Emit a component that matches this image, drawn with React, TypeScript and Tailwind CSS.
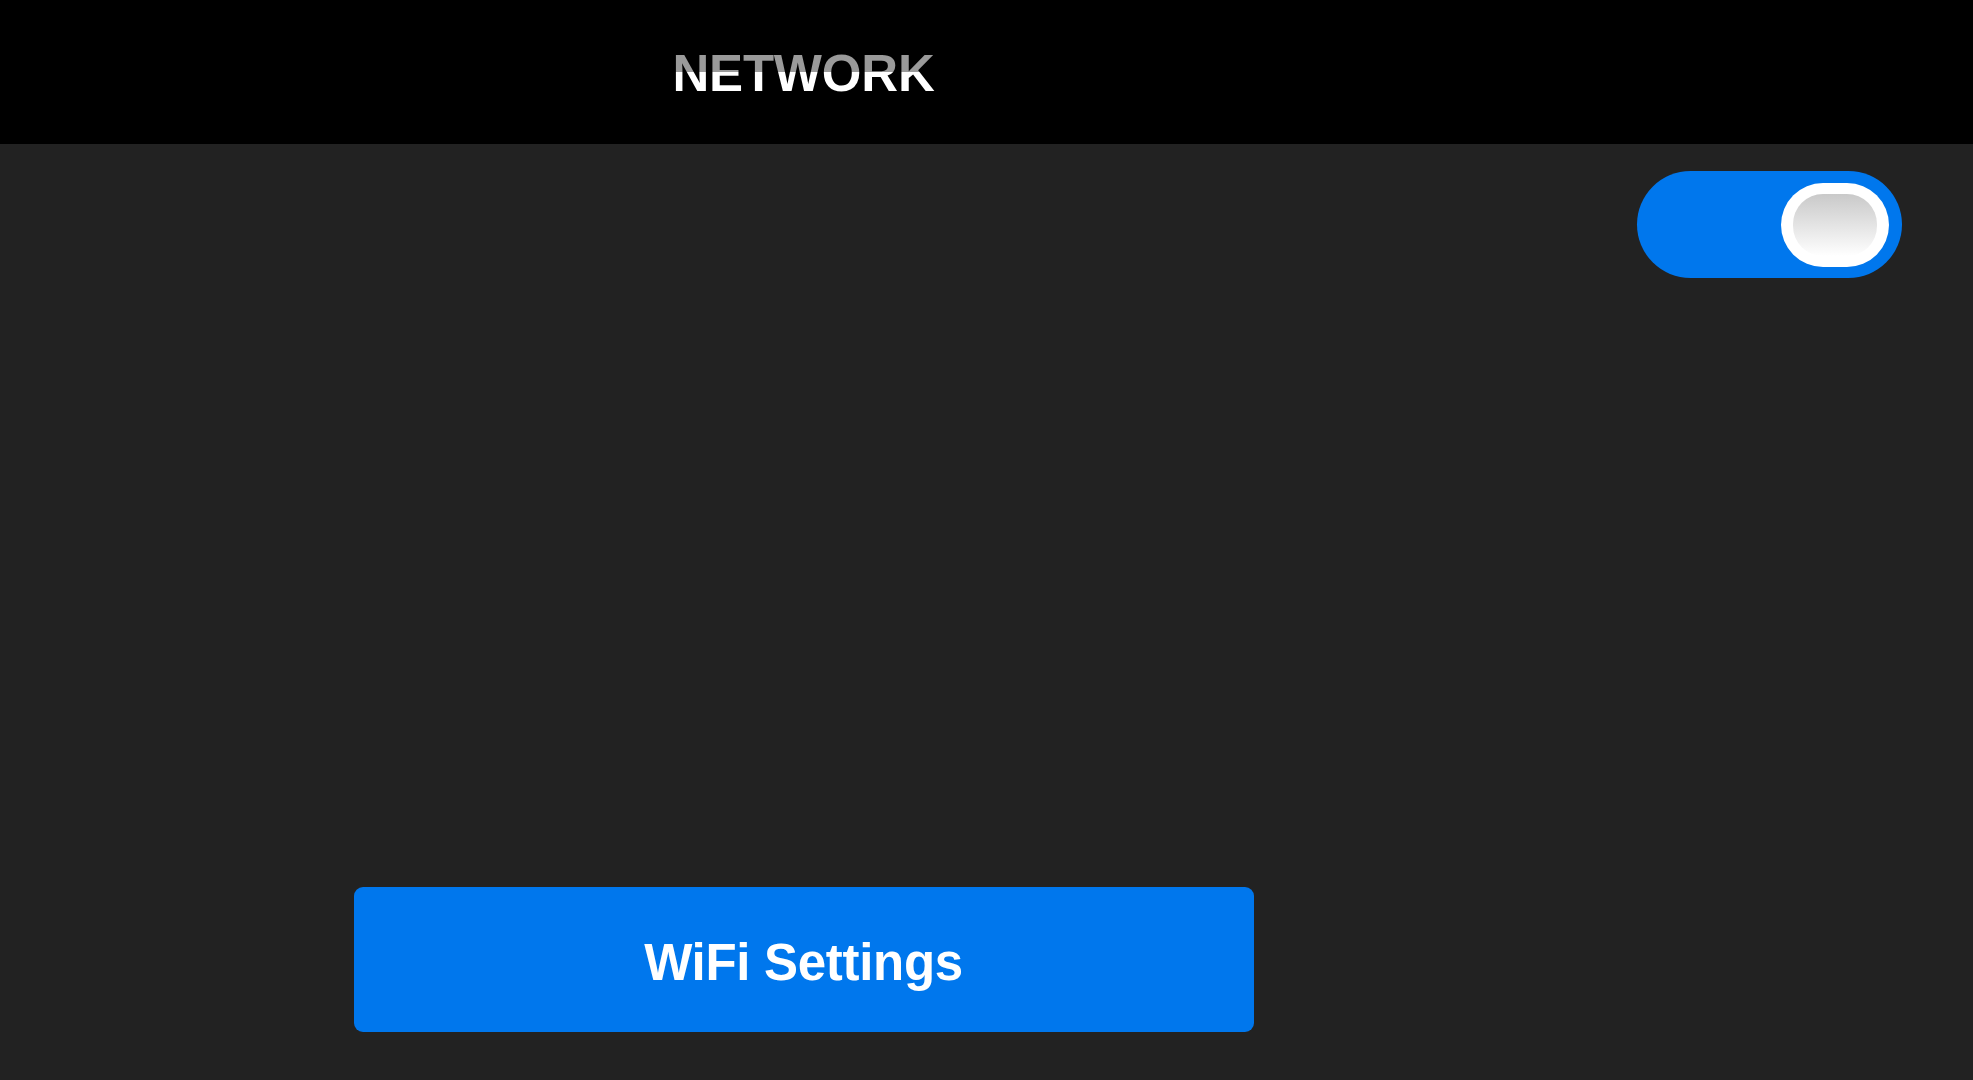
import { useState } from 'react';

export default function App() {
    const [enabled, setEnabled] = useState(true);

    return (
        <div className="flex h-[1080px] w-[1973px] flex-col bg-[#222222] font-['Liberation_Sans',Arial,sans-serif]">
            <header className="flex h-[144px] shrink-0 items-center bg-black">
                <div className="w-[1607px] text-center">
                    <h1 className="inline-block bg-[linear-gradient(to_bottom,#9a9a9a_0%,#9a9a9a_50%,#ffffff_50%,#ffffff_100%)] bg-clip-text pt-[4px] text-[51px] leading-[58px] font-bold tracking-[-0.2px] text-transparent">
                        NETWORK
                    </h1>
                </div>
            </header>

            <main className="flex flex-1">
                <div className="flex w-[1607px] flex-col items-center justify-end pb-[48px]">
                    <button
                        type="button"
                        className="flex h-[145px] w-[900px] items-center justify-center rounded-[9px] bg-[#0077ed] pt-[8px] text-[51px] font-bold tracking-[-0.3px] text-white">
                        WiFi Settings
                    </button>
                </div>

                <div className="flex flex-1 justify-end pt-[27px] pr-[71px]">
                    <button
                        type="button"
                        onClick={() => setEnabled(!enabled)}
                        className={`flex h-[107px] w-[265px] items-center rounded-full px-[13px] ${
                            enabled ? 'justify-end bg-[#0077ed]' : 'justify-start bg-[#555555]'
                        }`}>
                        <span className="flex h-[84px] w-[108px] rounded-full bg-white p-[11px_12px]">
                            <span className="h-full w-full rounded-[30px] bg-gradient-to-b from-[#c9c9c9] to-[#ffffff]" />
                        </span>
                    </button>
                </div>
            </main>
        </div>
    );
}
